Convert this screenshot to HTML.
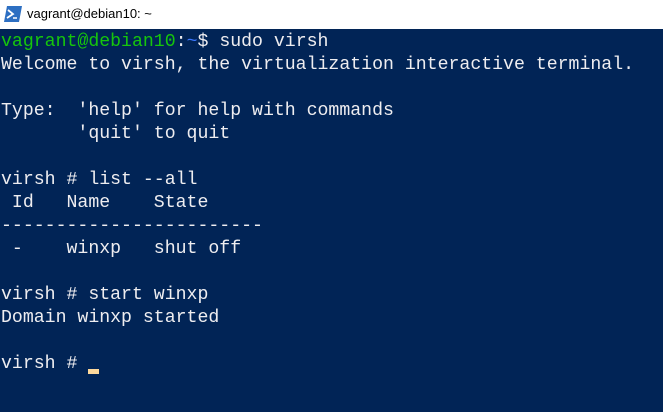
<!DOCTYPE html>
<html><head><style>
html,body{margin:0;padding:0;width:663px;height:412px;overflow:hidden;background:#012456}
.t{position:absolute;left:0;top:0;width:663px;height:29px;background:#fff;font-family:"Liberation Sans",sans-serif;font-size:13px;color:#000}
.t span{position:absolute;left:27px;top:6px}
pre{position:absolute;left:1px;top:31px;margin:0;font-family:"Liberation Mono",monospace;font-size:18.2px;line-height:23px;color:#eeedf0}
.g{color:#16c60c}.b{color:#3b78ff}
.c{position:absolute;left:88px;top:369px;width:11px;height:5px;background:#fdd89b}
</style></head><body>
<div class="t"><svg style="position:absolute;left:4px;top:6px" width="18" height="16" viewBox="0 0 18 16"><polygon points="3,0 18,0 15,16 0,16" fill="#2d6fc2"/><path d="M4 4 L9 8 L3 12" stroke="#fff" stroke-width="1.8" fill="none"/><path d="M9 12 H13" stroke="#fff" stroke-width="1.5"/></svg><span>vagrant@debian10: ~</span></div>
<pre><span class="g">vagrant@debian10</span>:<span class="b">~</span>$ sudo virsh
Welcome to virsh, the virtualization interactive terminal.

Type:  'help' for help with commands
       'quit' to quit

virsh # list --all
 Id   Name    State
------------------------
 -    winxp   shut off

virsh # start winxp
Domain winxp started

virsh # </pre>
<div class="c"></div>
</body></html>
